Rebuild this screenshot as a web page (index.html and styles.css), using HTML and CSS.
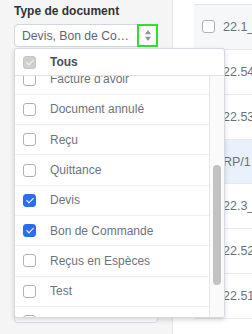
FILE: index.html
```html
<!DOCTYPE html>
<html lang="fr">
<head>
<meta charset="utf-8">
<title>Filtres</title>
<link rel="stylesheet" href="styles.css">
</head>
<body>
<div class="page">
  <aside class="filters">
    <div class="field">
      <label class="field-label">Type de document</label>
      <div class="select">
        <span class="select-value">Devis, Bon de Commande</span>
        <span class="select-arrow">
          <svg width="6" height="11" viewBox="0 0 6 11"><polygon points="3,0 6,4.3 0,4.3" fill="#8d939b"/><polygon points="0,6.7 6,6.7 3,11" fill="#8d939b"/></svg>
        </span>
      </div>
      <div class="select-card"></div>
      <div class="dropdown">
        <div class="dropdown-head"><span class="cb cb-dis"></span><span class="all">Tous</span></div>
        <div class="dropdown-body">
          <div class="dropdown-list" id="list">
            <div class="opt"><span class="cb"></span><span class="opt-text">Facture</span></div>
            <div class="opt"><span class="cb"></span><span class="opt-text">Avoir</span></div>
            <div class="opt"><span class="cb"></span><span class="opt-text">Bon de livraison</span></div>
            <div class="opt"><span class="cb"></span><span class="opt-text">Proforma</span></div>
            <div class="opt"><span class="cb"></span><span class="opt-text">Bon de réception</span></div>
            <div class="opt"><span class="cb"></span><span class="opt-text">Facture d'avoir</span></div>
            <div class="opt"><span class="cb"></span><span class="opt-text">Document annulé</span></div>
            <div class="opt"><span class="cb"></span><span class="opt-text">Reçu</span></div>
            <div class="opt"><span class="cb"></span><span class="opt-text">Quittance</span></div>
            <div class="opt"><span class="cb cb-on"></span><span class="opt-text">Devis</span></div>
            <div class="opt"><span class="cb cb-on"></span><span class="opt-text">Bon de Commande</span></div>
            <div class="opt"><span class="cb"></span><span class="opt-text">Reçus en Espèces</span></div>
            <div class="opt"><span class="cb"></span><span class="opt-text">Test</span></div>
            <div class="opt"><span class="cb"></span><span class="opt-text">Note de frais</span></div>
            <div class="opt"><span class="cb"></span><span class="opt-text">Autre</span></div>
          </div>
          <div class="scroll-track"><div class="scroll-thumb"></div></div>
        </div>
      </div>
    </div>
  </aside>
  <main class="results">
    <div class="table">
      <div class="row row-head"><span class="cell-check"><span class="cb"></span></span><span class="cell-ref">22.1_0001</span></div>
      <div class="row"><span class="cell-check"><span class="cb"></span></span><span class="cell-ref">22.54</span></div>
      <div class="row"><span class="cell-check"><span class="cb"></span></span><span class="cell-ref">22.53</span></div>
      <div class="row row-sel"><span class="cell-check"><span class="cb"></span></span><span class="cell-ref">RP/1</span></div>
      <div class="row"><span class="cell-check"><span class="cb"></span></span><span class="cell-ref">22.3_0002</span></div>
      <div class="row"><span class="cell-check"><span class="cb"></span></span><span class="cell-ref">22.52</span></div>
      <div class="row"><span class="cell-check"><span class="cb"></span></span><span class="cell-ref">22.51</span></div>
    </div>
  </main>
</div>
<script src="script.js"></script>
</body>
</html>
```

FILE: styles.css
```css
* { box-sizing: border-box; }
html, body { margin: 0; padding: 0; }
body {
  font-family: "Liberation Sans", Arial, sans-serif;
  background: #fff;
  overflow: hidden;
}
.page { display: flex; height: 334px; }

.filters {
  width: 173px;
  flex: none;
  background: #f5f5f5;
  border-right: 1px solid #e3e6ea;
  padding: 4px 0 0 14px;
}
.field { position: relative; width: 144px; }
.field-label {
  display: block;
  font-weight: bold;
  font-size: 12px;
  line-height: 15px;
  color: #333;
  margin-bottom: 5px;
}
.select {
  display: flex;
  align-items: center;
  height: 23px;
  border: 1px solid #cfd8e2;
  border-radius: 4px;
  background: #fff;
  padding-left: 7px;
}
.select-value {
  flex: 1;
  min-width: 0;
  white-space: nowrap;
  overflow: hidden;
  text-overflow: ellipsis;
  font-size: 12.2px;
  color: #5f6672;
}
.select-arrow {
  flex: none;
  align-self: stretch;
  width: 21px;
  margin: -1px -1px -1px 0;
  border: 2px solid #2fe12f;
  display: flex;
  align-items: center;
  justify-content: center;
}
.select-arrow svg { display: block; }

.select-card {
  height: 275px;
  margin-top: 1px;
  border: 1px solid #d8dfe7;
  border-radius: 4px;
  background: #fff;
}

.dropdown {
  position: absolute;
  z-index: 10;
  left: 0;
  top: 44px;
  width: 211px;
  height: 270px;
  border: 1px solid #d5dae0;
  border-radius: 3px;
  background: #fff;
  box-shadow: 0 2px 5px rgba(0, 0, 0, 0.16);
  display: flex;
  flex-direction: column;
  overflow: hidden;
}
.dropdown-head {
  flex: none;
  height: 27px;
  border-bottom: 1px solid #e2e2e2;
  display: flex;
  align-items: center;
  padding-left: 8px;
}
.all {
  margin-left: 14px;
  font-weight: bold;
  font-size: 12px;
  color: #4a4f57;
}
.dropdown-body {
  display: flex;
  height: 241px;
}
.dropdown-list {
  flex: 1;
  min-width: 0;
  overflow: hidden;
  padding-top: 17px;
}
.scroll-track {
  flex: none;
  width: 15px;
  border-left: 1px solid #e8e8e8;
  background: #fafafa;
  padding: 89px 0 0 3px;
}
.scroll-thumb {
  width: 8px;
  height: 120px;
  border-radius: 4px;
  background: #c2c2c2;
}
.opt {
  display: flex;
  align-items: center;
  height: 30.3px;
  border-bottom: 1px solid #eeeeee;
  padding-left: 8px;
  font-size: 12px;
  color: #6d737c;
  white-space: nowrap;
}
.opt-text { margin-left: 14px; }

.cb {
  position: relative;
  flex: none;
  width: 13px;
  height: 13px;
  border: 1px solid #aeb1b6;
  border-radius: 3px;
  background: #fff;
}
.cb-on { background: #2c6cf4; border-color: #2c6cf4; }
.cb-dis { background: #cfcfcf; border-color: #c6c6c6; }
.cb-on::after, .cb-dis::after {
  content: "";
  position: absolute;
  left: 3.5px;
  top: 1.2px;
  width: 3px;
  height: 6px;
  border: solid #fff;
  border-width: 0 1.5px 1.5px 0;
  transform: rotate(45deg);
}
.cb-dis::after { border-color: #f3f3f3; }

.results {
  flex: 1;
  min-width: 0;
  padding: 4px 0 0 21px;
  overflow: hidden;
}
.table {
  width: 200px;
  border-top: 1px solid #e3e6ea;
}
.row {
  display: flex;
  align-items: center;
  height: 44.86px;
  border-bottom: 1px solid #e6e9ed;
  background: #fff;
}
.row-head { background: #f6f7f9; }
.row-sel { background: #e9f1fc; }
.cell-check { flex: none; width: 29px; padding-left: 8px; display: flex; }
.cell-ref {
  font-size: 12.5px;
  color: #6b717a;
  white-space: nowrap;
}
```

FILE: script.js
```js
document.getElementById('list').scrollTop = 180;
```
